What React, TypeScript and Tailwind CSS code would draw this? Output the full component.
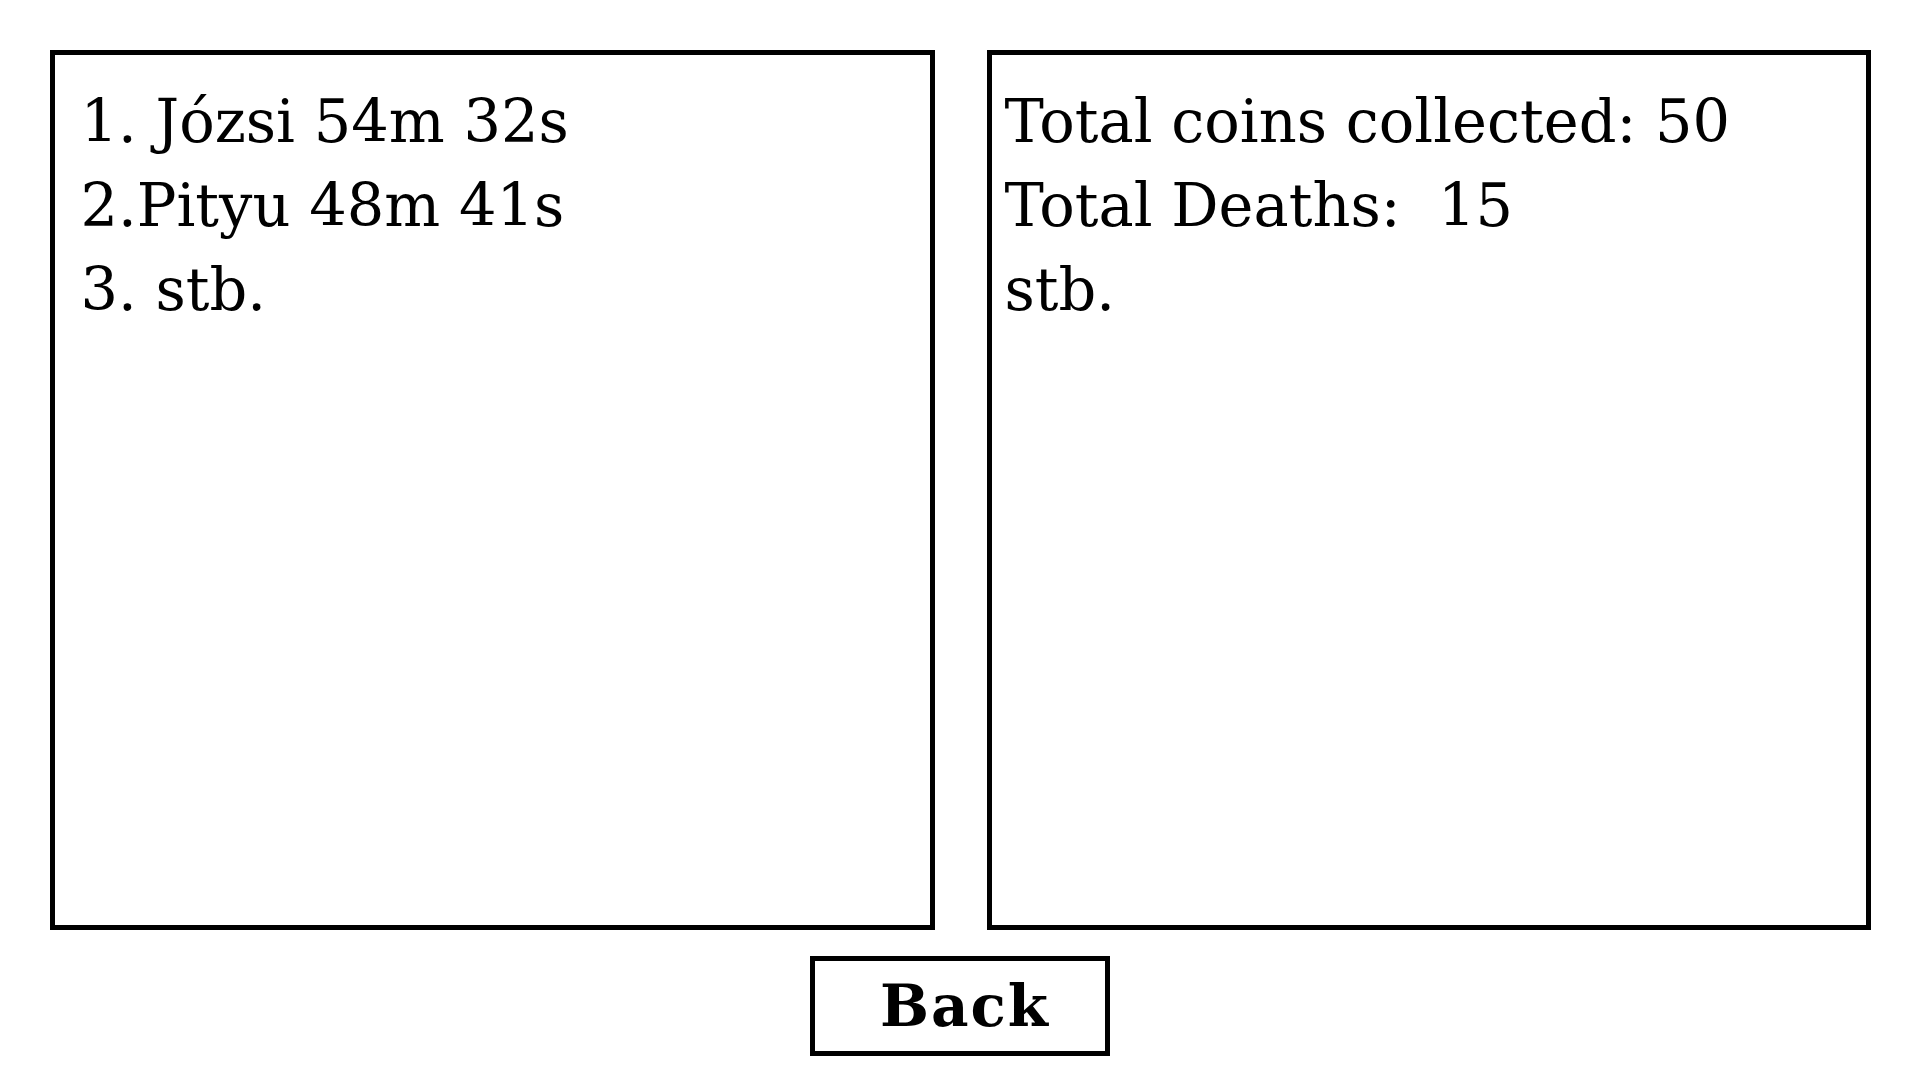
export default function App() {
  return (
    <div className="min-h-screen bg-white text-black">
      <div className="flex flex-col items-center pt-[50px]">
        <div className="flex gap-[52px]">
          <div
            className="w-[885px] h-[880px] border-[5px] border-black pl-[26px] pt-[25px] text-[59px] leading-[84px]"
            style={{ fontFamily: '"DejaVu Serif", serif' }}
          >
            <div>1. Józsi 54m 32s</div>
            <div>2.Pityu 48m 41s</div>
            <div>3. stb.</div>
          </div>
          <div
            className="w-[884px] h-[880px] border-[5px] border-black pl-[13px] pt-[25px] text-[59px] leading-[84px]"
            style={{ fontFamily: '"DejaVu Serif", serif' }}
          >
            <div>Total coins collected: 50</div>
            <div className="whitespace-pre">Total Deaths:  15</div>
            <div>stb.</div>
          </div>
        </div>
        <button className="mt-[26px] w-[300px] h-[100px] border-[5px] border-black bg-white pl-[10px] font-['DejaVu_Serif',serif] text-[58px] font-bold leading-none tracking-[2px]">
          Back
        </button>
      </div>
    </div>
  );
}
